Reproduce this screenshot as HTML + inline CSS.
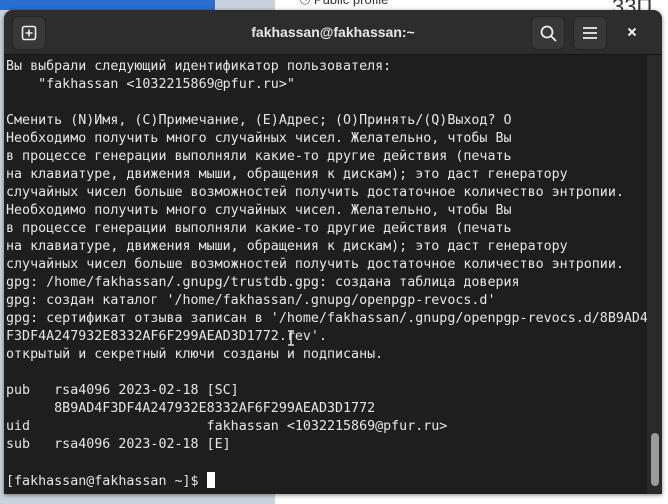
<!DOCTYPE html>
<html><head><meta charset="utf-8"><style>
html,body{margin:0;padding:0;width:668px;height:504px;overflow:hidden;background:#fff;font-family:"Liberation Sans",sans-serif}
.bgl{position:absolute;left:0;top:0;width:275px;height:504px;background:#c9d3de}
.bgt{position:absolute;left:0;top:0;width:215px;height:10px;background:#2a6fd0}
.win{position:absolute;left:4px;top:10px;width:658px;height:484px;background:#1e1e1e;border-radius:9px 9px 0 0;overflow:hidden;box-shadow:0 1px 4px rgba(0,0,0,.5)}
.hdr{position:absolute;left:0;top:0;width:658px;height:44px;background:#2d2d2d;border-bottom:1px solid #141414}
.btn{position:absolute;top:6px;width:32px;height:32px;border-radius:6px;background:#383838;border:1px solid #242424}
.title{position:absolute;left:0;right:0;top:14px;text-align:center;color:#e8e8e8;font-weight:bold;font-size:14px}
.term{position:absolute;left:2px;top:48px;margin:0;font-family:"DejaVu Sans Mono","Liberation Mono",monospace;font-size:13.33px;line-height:18px;color:#e6e6e6;white-space:pre}
.sb{position:absolute;left:643px;top:45px;width:15px;height:439px;background:#2a2a2a}
.thumb{position:absolute;left:647px;top:423px;width:8px;height:53px;border-radius:4px;background:#9a9a9a}
.cur{display:inline-block;width:8px;height:16px;background:#fff;vertical-align:-3px}
</style></head><body>
<div class="bgl"></div><div class="bgt"></div>
<div style="position:absolute;left:612px;top:-6px;font-size:22px;color:#333">33П</div>
<div style="position:absolute;left:300px;top:-8px;font-size:13px;color:#333">⎋ Public profile</div>
<div class="win">
<div class="hdr">
<div class="btn" style="left:8px"><svg width="32" height="32" viewBox="0 0 32 32"><rect x="9.5" y="9.5" width="13" height="13" rx="2" fill="none" stroke="#eee" stroke-width="1.6"/><path d="M16 12.5v7M12.5 16h7" stroke="#eee" stroke-width="1.6"/></svg></div>
<div class="title">fakhassan@fakhassan:~</div>
<div class="btn" style="left:527px"><svg width="32" height="32" viewBox="0 0 32 32"><circle cx="15" cy="15" r="5.5" fill="none" stroke="#eee" stroke-width="1.8"/><path d="M19 19l5 5" stroke="#eee" stroke-width="1.8"/></svg></div>
<div class="btn" style="left:569px"><svg width="32" height="32" viewBox="0 0 32 32"><path d="M9 11h14M9 16h14M9 21h14" stroke="#eee" stroke-width="1.8"/></svg></div>
<svg style="position:absolute;left:620px;top:14px" width="16" height="16" viewBox="0 0 16 16"><path d="M4.5 4.5l7 7M11.5 4.5l-7 7" stroke="#eee" stroke-width="2"/></svg>
</div>
<pre class="term">Вы выбрали следующий идентификатор пользователя:
    "fakhassan &lt;1032215869@pfur.ru&gt;"

Сменить (N)Имя, (C)Примечание, (E)Адрес; (O)Принять/(Q)Выход? O
Необходимо получить много случайных чисел. Желательно, чтобы Вы
в процессе генерации выполняли какие-то другие действия (печать
на клавиатуре, движения мыши, обращения к дискам); это даст генератору
случайных чисел больше возможностей получить достаточное количество энтропии.
Необходимо получить много случайных чисел. Желательно, чтобы Вы
в процессе генерации выполняли какие-то другие действия (печать
на клавиатуре, движения мыши, обращения к дискам); это даст генератору
случайных чисел больше возможностей получить достаточное количество энтропии.
gpg: /home/fakhassan/.gnupg/trustdb.gpg: создана таблица доверия
gpg: создан каталог '/home/fakhassan/.gnupg/openpgp-revocs.d'
gpg: сертификат отзыва записан в '/home/fakhassan/.gnupg/openpgp-revocs.d/8B9AD4
F3DF4A247932E8332AF6F299AEAD3D1772.rev'.
открытый и секретный ключи созданы и подписаны.

pub   rsa4096 2023-02-18 [SC]
      8B9AD4F3DF4A247932E8332AF6F299AEAD3D1772
uid                      fakhassan &lt;1032215869@pfur.ru&gt;
sub   rsa4096 2023-02-18 [E]

[fakhassan@fakhassan ~]$ <span class="cur"></span></pre>
<svg style="position:absolute;left:283px;top:320px" width="8" height="16" viewBox="0 0 8 16"><path d="M1 1h6M1 15h6M4 1v14" stroke="#ddd" stroke-width="1.5"/></svg>
<div class="sb"></div><div class="thumb"></div>
</div>
</body></html>
